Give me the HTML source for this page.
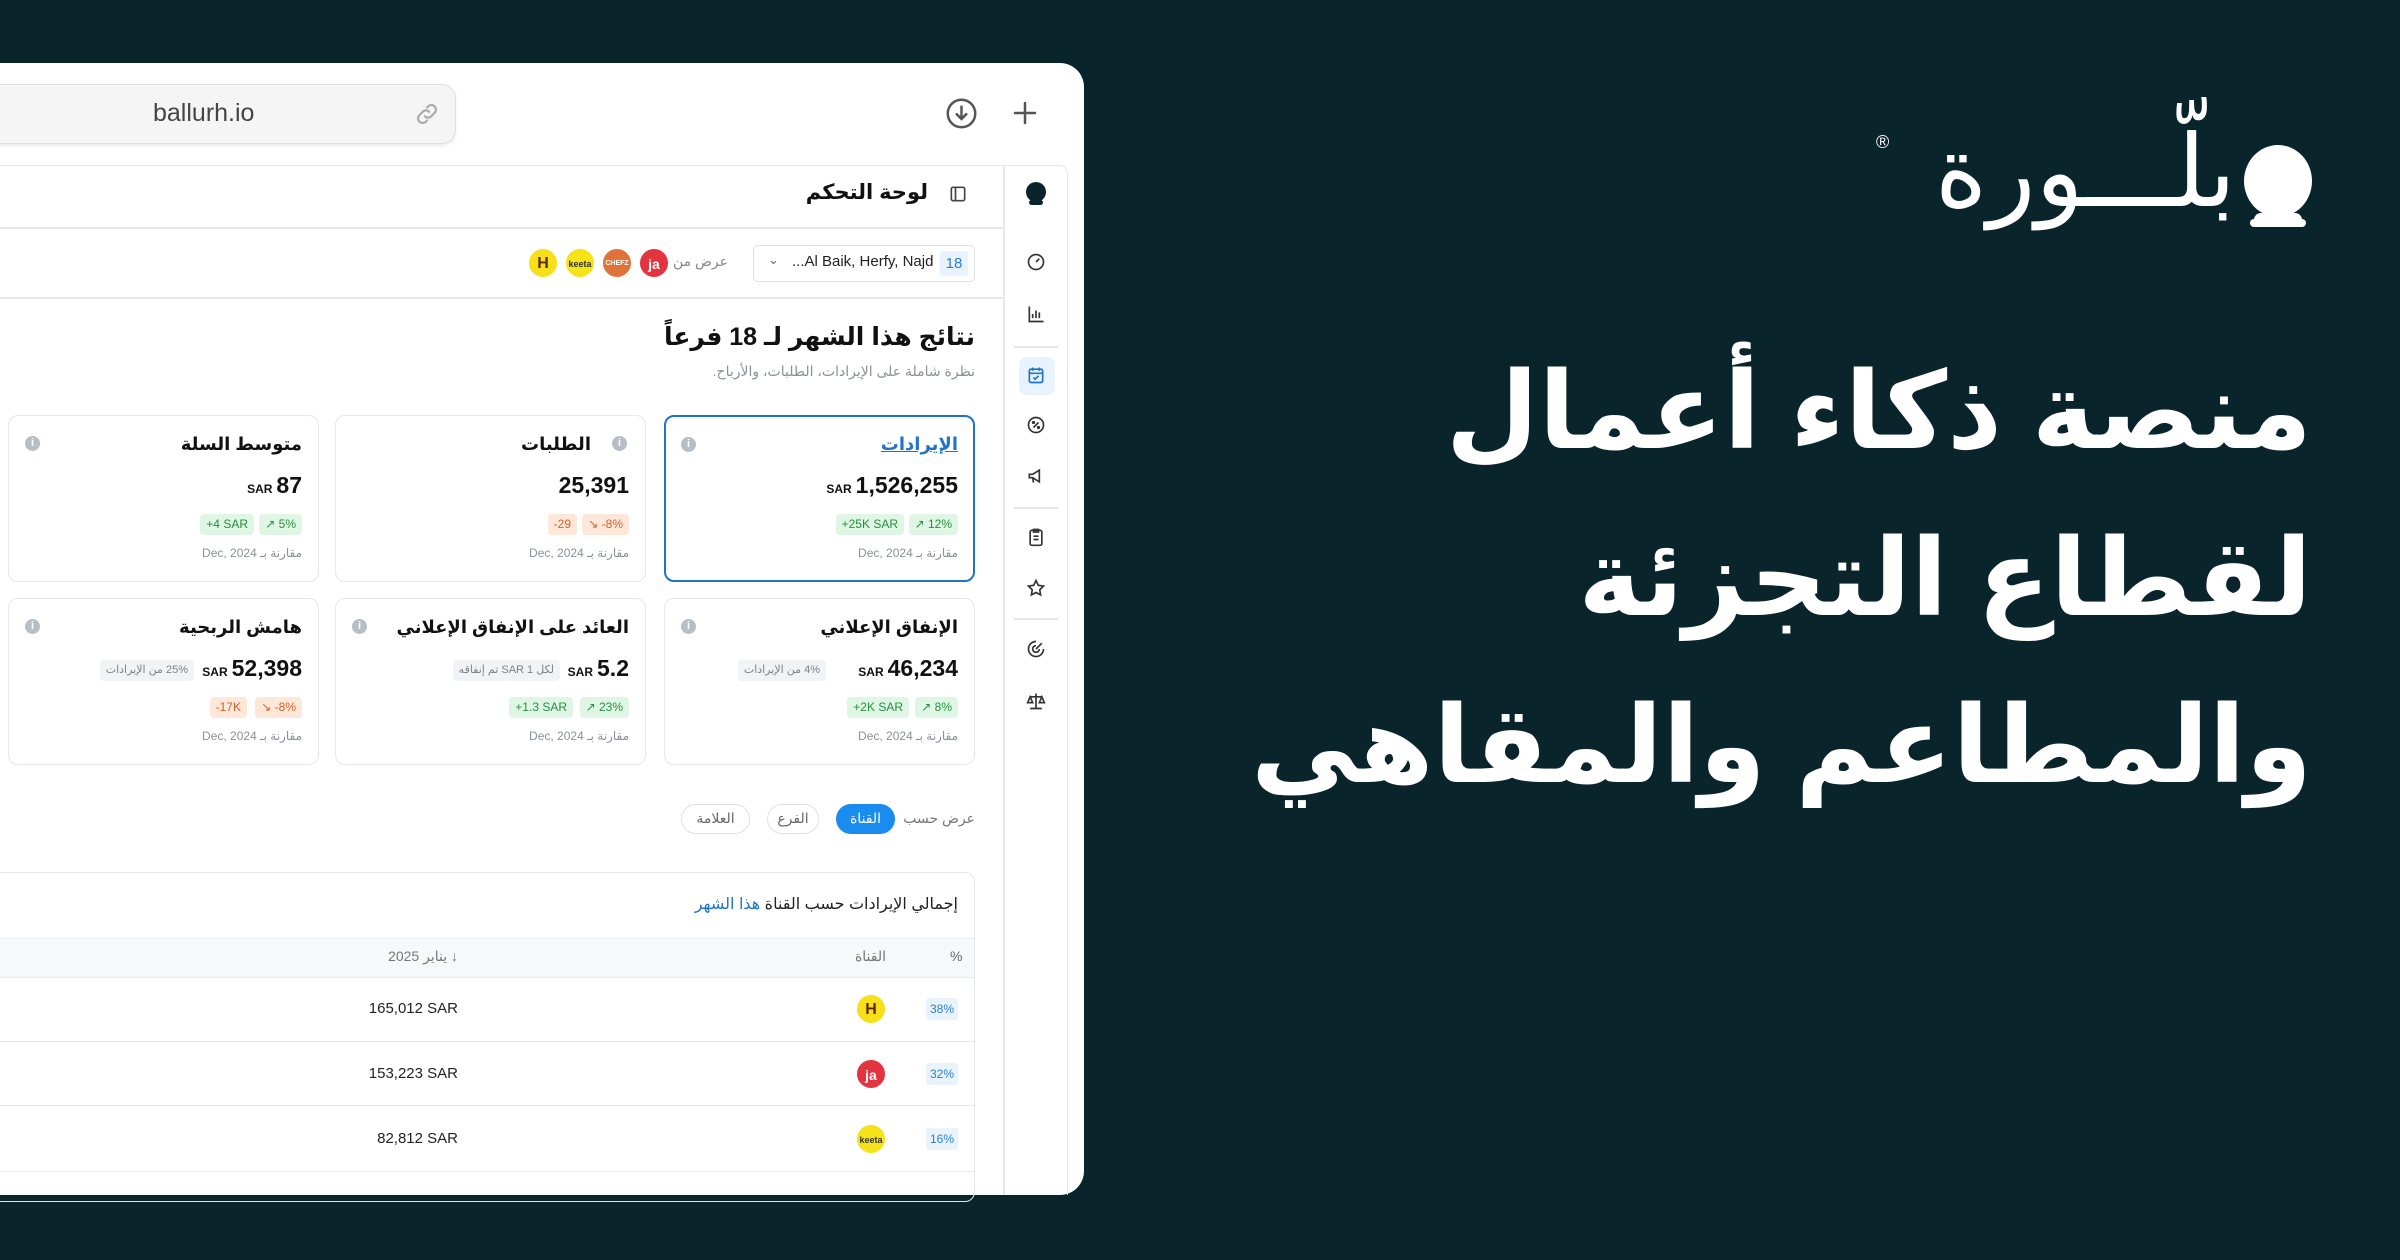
<!DOCTYPE html>
<html><head><meta charset="utf-8">
<style>
*{margin:0;padding:0;box-sizing:border-box}
body{width:2400px;height:1260px;background:#0a242c;position:relative;overflow:hidden;font-family:"Liberation Sans","DejaVu Sans",sans-serif;color:#111}
.a{position:absolute}
.r{direction:rtl;text-align:right;white-space:nowrap}
.win{left:-30px;top:63px;width:1114px;height:1132px;background:#fff;border-radius:24px}
.card{position:absolute;background:#fff;border:1.5px solid #e4e7eb;border-radius:10px}
.card.act{border:2.5px solid #1f74c9}
.ct{position:absolute;right:16px;top:18px;font-size:18px;font-weight:bold;direction:rtl;white-space:nowrap}
.info{position:absolute;top:20px;width:15px;height:15px;border-radius:50%;background:#b8bec6;color:#fff;font-size:11px;text-align:center;line-height:15px;font-weight:bold}
.cv{position:absolute;right:16px;top:56px;font-size:23px;font-weight:bold;white-space:nowrap;direction:ltr}
.cv small{font-size:12px;font-weight:bold;margin-right:4px}
.bd{position:absolute;top:98px;height:21px;font-size:12px;line-height:21px;padding:0 6px;border-radius:4px;white-space:nowrap;direction:ltr}
.g{background:#dff6e4;color:#23903f}
.o{background:#fde7d9;color:#d5612a}
.gr{background:#f1f3f5;color:#7a828c;direction:rtl}
.dt{position:absolute;right:16px;top:130px;font-size:12px;color:#8a9098;direction:rtl;white-space:nowrap}
.pill{position:absolute;top:804px;height:30px;border-radius:15px;border:1.5px solid #dde1e6;font-size:14px;line-height:27px;text-align:center;color:#666;direction:rtl}
.logo{position:absolute;width:30px;height:30px;border-radius:50%;font-size:12px;font-weight:bold;text-align:center;line-height:30px;border:1.5px solid #fff}
.si{position:absolute;left:1026px;width:20px;height:20px}
.row{position:absolute;left:0;width:975px;height:64px;border-top:1.5px solid #e8ebee}
.pct{position:absolute;left:926px;width:32px;height:22px;background:#e8f3fd;color:#2c7fd0;font-size:12px;line-height:22px;text-align:center;border-radius:3px}
.amt{position:absolute;right:517px;font-size:15px;color:#222;white-space:nowrap}
.h{color:#fff;font-weight:bold;font-size:107px;direction:rtl;text-align:right;white-space:nowrap;right:88px;line-height:1}
</style></head><body>

<div class="a win"></div>
<div class="a" style="left:-20px;top:84px;width:476px;height:60px;background:#f5f5f6;border:1.5px solid #e0e0e2;border-radius:14px;box-shadow:0 2px 3px rgba(0,0,0,.08)"></div>
<div class="a" style="left:153px;top:99px;font-size:25px;color:#444">ballurh.io</div>
<svg class="a" style="left:414px;top:101px" width="26" height="26" viewBox="0 0 24 24" fill="none" stroke="#aaa" stroke-width="2" stroke-linecap="round"><path d="M10 14a4 4 0 0 0 6 0l3-3a4 4 0 0 0-6-6l-1 1"/><path d="M14 10a4 4 0 0 0-6 0l-3 3a4 4 0 0 0 6 6l1-1"/></svg>
<svg class="a" style="left:945px;top:97px" width="33" height="33" viewBox="0 0 24 24" fill="none" stroke="#555" stroke-width="1.8" stroke-linecap="round"><circle cx="12" cy="12" r="10"/><path d="M12 7v9M8.5 12.5 12 16l3.5-3.5"/></svg>
<svg class="a" style="left:1010px;top:98px" width="30" height="30" viewBox="0 0 24 24" fill="none" stroke="#555" stroke-width="2" stroke-linecap="round"><path d="M12 4v16M4 12h16"/></svg>

<div class="a" style="left:-10px;top:165px;width:1078px;height:1030px;border:1.5px solid #e6e8eb;border-bottom:none;border-radius:8px 8px 0 0"></div>
<div class="a" style="left:1003px;top:166px;width:1.5px;height:1029px;background:#e6e8eb"></div>
<div class="a" style="left:0;top:227px;width:1003px;height:1.5px;background:#e6e8eb"></div>
<div class="a" style="left:0;top:297px;width:1003px;height:1.5px;background:#e6e8eb"></div>
<svg class="a" style="left:1024px;top:181px" width="24" height="26" viewBox="0 0 24 26"><circle cx="12" cy="11" r="10" fill="#0a242c"/><rect x="5" y="19" width="14" height="5" rx="2.5" fill="#0a242c"/></svg>
<div class="a" style="left:1014px;top:346px;width:44px;height:1.5px;background:#e6e8eb"></div>
<div class="a" style="left:1014px;top:507px;width:44px;height:1.5px;background:#e6e8eb"></div>
<div class="a" style="left:1014px;top:618px;width:44px;height:1.5px;background:#e6e8eb"></div>
<div class="a" style="left:1019px;top:357px;width:36px;height:38px;background:#e9f3fd;border-radius:7px"></div>
<svg class="si" style="top:252px" viewBox="0 0 24 24" fill="none" stroke="#333" stroke-width="2"><circle cx="12" cy="12" r="9"/><path d="M12 12l4-4"/></svg>
<svg class="si" style="top:304px" viewBox="0 0 24 24" fill="none" stroke="#333" stroke-width="2"><path d="M4 3v18h17M8 17v-5M12 17V8M16 17v-7"/></svg>
<svg class="si" style="top:365px" viewBox="0 0 24 24" fill="none" stroke="#1f74c9" stroke-width="2"><rect x="4" y="5" width="16" height="16" rx="2"/><path d="M4 10h16M8 3v4M16 3v4M9 15l2 2 4-4"/></svg>
<svg class="si" style="top:415px" viewBox="0 0 24 24" fill="none" stroke="#333" stroke-width="2"><circle cx="12" cy="12" r="9"/><path d="M9 15l6-6"/><circle cx="9" cy="9" r="1"/><circle cx="15" cy="15" r="1"/></svg>
<svg class="si" style="top:466px" viewBox="0 0 24 24" fill="none" stroke="#333" stroke-width="2"><path d="M4 10v4h4l8 5V5l-8 5z"/><path d="M8 14l1 6"/></svg>
<svg class="si" style="top:527px" viewBox="0 0 24 24" fill="none" stroke="#333" stroke-width="2"><rect x="5" y="4" width="14" height="18" rx="2"/><path d="M9 3h6v3H9zM9 11h6M9 15h6"/></svg>
<svg class="si" style="top:578px" viewBox="0 0 24 24" fill="none" stroke="#333" stroke-width="2"><path d="M12 3l2.8 5.8 6.2.9-4.5 4.4 1 6.2L12 17.4 6.5 20.3l1-6.2L3 9.7l6.2-.9z"/></svg>
<svg class="si" style="top:639px" viewBox="0 0 24 24" fill="none" stroke="#333" stroke-width="2"><path d="M12 3a9 9 0 1 0 9 9"/><path d="M12 8a4 4 0 1 0 4 4"/><path d="M12 12l7-7"/></svg>
<svg class="si" style="top:691px" viewBox="0 0 24 24" fill="none" stroke="#333" stroke-width="2"><path d="M12 3v18M5 21h14M5 7h14M5 7l-3 7h6zM19 7l-3 7h6z"/></svg>

<div class="a r" style="right:1472px;top:180px;font-size:21px;font-weight:bold">لوحة التحكم</div>
<svg class="a" style="left:948px;top:184px" width="20" height="20" viewBox="0 0 24 24" fill="none" stroke="#444" stroke-width="2"><rect x="4" y="4" width="16" height="16" rx="2"/><path d="M9 4v16"/></svg>

<div class="a" style="left:753px;top:245px;width:222px;height:37px;border:1.5px solid #dde1e6;border-radius:5px"></div>
<div class="a" style="left:940px;top:251px;width:28px;height:25px;background:#e8f3fd;color:#2c7fd0;font-size:15px;line-height:25px;text-align:center;border-radius:3px">18</div>
<div class="a" style="left:792px;top:253px;font-size:15px;color:#222">...Al Baik, Herfy, Najd</div>
<div class="a" style="left:768px;top:252px;font-size:13px;color:#666">&#8964;</div>
<div class="a r" style="right:1672px;top:253px;font-size:14px;color:#888">عرض من</div>
<div class="logo" style="left:528px;top:248px;background:#f7e01a;color:#5a2a10;font-size:16px">H</div>
<div class="logo" style="left:565px;top:248px;background:#f5e218;color:#333;font-size:9px">keeta</div>
<div class="logo" style="left:602px;top:248px;background:#e0733a;color:#fff;font-size:7px">CHEFZ</div>
<div class="logo" style="left:639px;top:248px;background:#e3343f;color:#fff;font-size:14px">ja</div>

<div class="a r" style="right:1425px;top:322px;font-size:25px;font-weight:bold">نتائج هذا الشهر لـ 18 فرعاً</div>
<div class="a r" style="right:1425px;top:363px;font-size:14px;color:#8a9098">نظرة شاملة على الإيرادات، الطلبات، والأرباح.</div>

<div class="card act" style="left:664px;top:415px;width:311px;height:167px">
 <div class="ct" style="color:#1f74c9;text-decoration:underline;right:15px;top:17px">الإيرادات</div><div class="info" style="left:15px">i</div>
 <div class="cv" style="right:15px;top:55px"><small>SAR</small>1,526,255</div>
 <div class="bd g" style="right:15px;top:97px">&#8599; 12%</div><div class="bd g" style="right:69px;top:97px">+25K SAR</div>
 <div class="dt" style="right:15px;top:129px">مقارنة بـ Dec, 2024</div>
</div>
<div class="card" style="left:335px;top:415px;width:311px;height:167px">
 <div class="ct" style="right:54px">الطلبات</div><div class="info" style="right:18px">i</div>
 <div class="cv">25,391</div>
 <div class="bd o" style="right:16px">&#8600; -8%</div><div class="bd o" style="right:68px">-29</div>
 <div class="dt">مقارنة بـ Dec, 2024</div>
</div>
<div class="card" style="left:8px;top:415px;width:311px;height:167px">
 <div class="ct">متوسط السلة</div><div class="info" style="left:16px">i</div>
 <div class="cv"><small>SAR</small>87</div>
 <div class="bd g" style="right:16px">&#8599; 5%</div><div class="bd g" style="right:64px">+4 SAR</div>
 <div class="dt">مقارنة بـ Dec, 2024</div>
</div>
<div class="card" style="left:664px;top:598px;width:311px;height:167px">
 <div class="ct">الإنفاق الإعلاني</div><div class="info" style="left:16px">i</div>
 <div class="cv"><small>SAR</small>46,234</div>
 <div class="bd gr" style="right:148px;top:61px;font-size:11px">4% من الإيرادات</div>
 <div class="bd g" style="right:16px">&#8599; 8%</div><div class="bd g" style="right:65px">+2K SAR</div>
 <div class="dt">مقارنة بـ Dec, 2024</div>
</div>
<div class="card" style="left:335px;top:598px;width:311px;height:167px">
 <div class="ct">العائد على الإنفاق الإعلاني</div><div class="info" style="left:16px">i</div>
 <div class="cv"><small>SAR</small>5.2</div>
 <div class="bd gr" style="right:85px;top:61px;font-size:11px">لكل 1 SAR تم إنفاقه</div>
 <div class="bd g" style="right:16px">&#8599; 23%</div><div class="bd g" style="right:72px">+1.3 SAR</div>
 <div class="dt">مقارنة بـ Dec, 2024</div>
</div>
<div class="card" style="left:8px;top:598px;width:311px;height:167px">
 <div class="ct">هامش الربحية</div><div class="info" style="left:16px">i</div>
 <div class="cv"><small>SAR</small>52,398</div>
 <div class="bd gr" style="right:124px;top:61px;font-size:11px">25% من الإيرادات</div>
 <div class="bd o" style="right:16px">&#8600; -8%</div><div class="bd o" style="right:71px">-17K</div>
 <div class="dt">مقارنة بـ Dec, 2024</div>
</div>

<div class="a r" style="right:1425px;top:810px;font-size:14px;color:#777">عرض حسب</div>
<div class="pill" style="left:836px;width:59px;background:#1a8cf0;border-color:#1a8cf0;color:#fff">القناة</div>
<div class="pill" style="left:767px;width:52px">الفرع</div>
<div class="pill" style="left:681px;width:69px">العلامة</div>

<div class="a" style="left:-10px;top:872px;width:985px;height:330px;border:1.5px solid #e4e7eb;border-radius:10px;overflow:hidden">
 <div class="a" style="left:0;top:65px;width:985px;height:40px;background:#f6f8fa;border-top:1.5px solid #e8ebee"></div>
</div>
<div class="a r" style="right:1442px;top:894px;font-size:16px;color:#222">إجمالي الإيرادات حسب القناة <span style="color:#1f74c9">هذا الشهر</span></div>
<div class="a" style="left:950px;top:948px;font-size:14px;color:#666">%</div>
<div class="a r" style="right:1514px;top:948px;font-size:14px;color:#777">القناة</div>
<div class="a r" style="right:1942px;top:948px;font-size:14px;color:#777">&#8595; يناير 2025</div>
<div class="row" style="top:977px"><div class="pct" style="top:20px">38%</div><div class="logo" style="left:856px;top:16px;background:#f7e01a;color:#5a2a10;font-size:16px">H</div><div class="amt" style="top:22px">165,012 SAR</div></div>
<div class="row" style="top:1041px"><div class="pct" style="top:21px">32%</div><div class="logo" style="left:856px;top:17px;background:#e3343f;color:#fff;font-size:14px">ja</div><div class="amt" style="top:23px">153,223 SAR</div></div>
<div class="row" style="top:1105px"><div class="pct" style="top:22px">16%</div><div class="logo" style="left:856px;top:18px;background:#f5e218;color:#333;font-size:9px">keeta</div><div class="amt" style="top:24px">82,812 SAR</div></div>
<div class="row" style="top:1171px"></div>

<svg class="a" style="left:2240px;top:143px" width="76" height="88" viewBox="0 0 76 88"><ellipse cx="38" cy="38" rx="34" ry="36" fill="#fff"/><rect x="14" y="70" width="48" height="14" rx="7" fill="#fff"/><rect x="10" y="76" width="56" height="8" rx="4" fill="#fff"/></svg>
<div class="a" style="right:164px;top:112px;color:#fff;font-size:100px;direction:rtl;white-space:nowrap;font-weight:normal;line-height:1.2">بلّـــورة</div>
<div class="a" style="left:1876px;top:132px;color:#fff;font-size:18px">®</div>
<div class="a h" style="top:358px">منصة ذكاء أعمال</div>
<div class="a h" style="top:525px">لقطاع التجزئة</div>
<div class="a h" style="top:692px">والمطاعم والمقاهي</div>
</body></html>
